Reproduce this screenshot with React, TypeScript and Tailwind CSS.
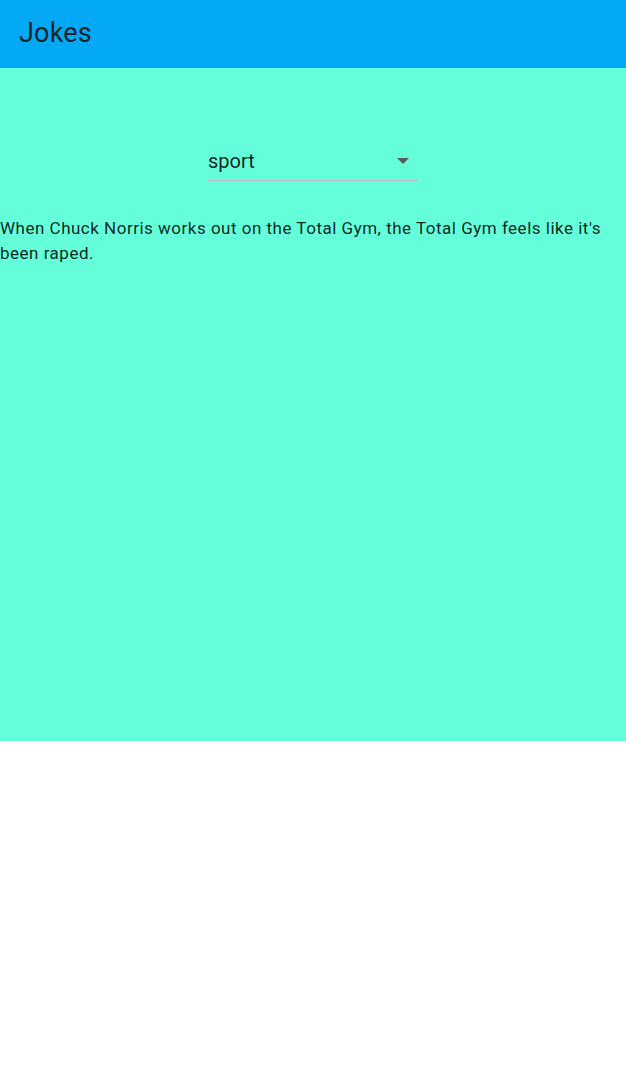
import React from "react";

export default function App() {
  return (
    <div className="w-[626px] min-h-[1079px] bg-white" style={{ fontFamily: "Roboto, 'Noto Sans', sans-serif" }}>
      <header className="h-[68px] bg-[#03a9f4] flex items-center px-[19px]">
        <h1 className="text-[27px] leading-none text-[#1d2327] font-normal tracking-[0.2px] -mt-[2px]">Jokes</h1>
      </header>
      <main className="h-[673px] bg-[#64ffda] flex flex-col">
        <div className="flex justify-center pt-[80px]">
          <div className="w-[210px] h-[33px] border-b border-[#c6b8c4] flex items-center justify-between">
            <span className="text-[20px] leading-none text-[rgba(0,0,0,0.87)] -mt-[7px]">sport</span>
            <svg width="12" height="6" viewBox="0 0 12 6" className="mr-[9px] -mt-[6px]">
              <path d="M0 0 L12 0 L6 6 Z" fill="#5a5a5a" />
            </svg>
          </div>
        </div>
        <p className="mt-[35px] text-[17px] leading-[25px] tracking-[0.5px] text-[rgba(0,0,0,0.87)] pr-[20px]">
          When Chuck Norris works out on the Total Gym, the Total Gym feels like it's been raped.
        </p>
      </main>
    </div>
  );
}
